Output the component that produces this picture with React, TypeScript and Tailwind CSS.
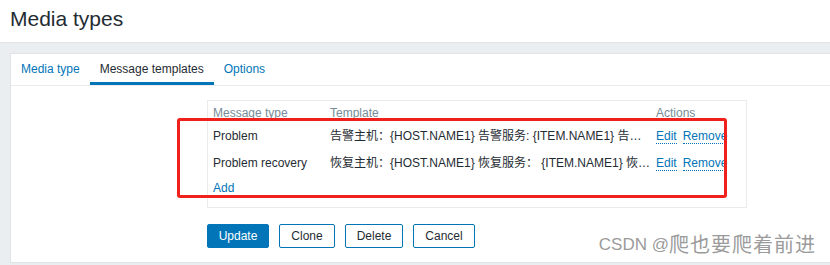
const rows = [
  {
    type: 'Problem',
    template: '告警主机：{HOST.NAME1} 告警服务: {ITEM.NAME1} 告警Key1: {ITEM.KEY1} 告警时间：{EVENT.DATE} {EVENT.TIME}',
  },
  {
    type: 'Problem recovery',
    template: '恢复主机：{HOST.NAME1} 恢复服务： {ITEM.NAME1} 恢复Key1: {ITEM.KEY1} 恢复时间：{EVENT.RECOVERY.DATE}',
  },
];

const tabs = ['Media type', 'Message templates', 'Options'];

export default function App() {
  return (
    <div className="relative w-[830px] h-[265px] overflow-hidden bg-[#ebeef0] font-['Liberation_Sans','Noto_Sans_CJK_SC',sans-serif] text-[12px] leading-[14px] text-[#1f2c33]">
      <header className="h-[43px] bg-white border-b border-[#dfe4e7] pl-[10px] pt-[7px]">
        <h1 className="text-[21px] leading-[24px]">Media types</h1>
      </header>

      <div className="pl-[10px] pt-[10px]">
        <div className="bg-white border-y border-l border-[#dfe4e7] pb-[14px]">
          {/* tabs */}
          <ul className="flex border-b border-[#ebebeb]">
            {tabs.map((t) => {
              const active = t === 'Message templates';
              return (
                <li
                  key={t}
                  className={
                    active
                      ? 'h-[31px] px-[10px] pt-[8px] border-b-[3px] border-[#0275b8] text-[#1f2c33]'
                      : 'h-[31px] px-[10px] pt-[8px] text-[#0275b8]'
                  }
                >
                  {t}
                </li>
              );
            })}
          </ul>

          <div className="ml-[196px]">
            {/* templates table */}
            <div className="mt-[14px] w-[540px] border border-[#ebebeb] px-[5px] pb-[5px]">
              <div className="grid grid-cols-[117px_326px_1fr] h-[22px] pt-[5px] text-[#768d99]">
                <span>Message type</span>
                <span>Template</span>
                <span>Actions</span>
              </div>
              {rows.map((r) => (
                <div key={r.type} className="grid grid-cols-[117px_326px_1fr] items-start h-[27px] pt-[6px]">
                  <span>{r.type}</span>
                  <span className="min-w-0 truncate pr-[4px]">{r.template}</span>
                  <span className="flex items-start gap-[6px] whitespace-nowrap">
                    <a className="text-[#0275b8] border-b border-dotted border-[#0275b8]">Edit</a>
                    <a className="text-[#0275b8] border-b border-dotted border-[#0275b8]">Remove</a>
                  </span>
                </div>
              ))}
              <div className="h-[25px] pt-[4px]">
                <a className="text-[#0275b8]">Add</a>
              </div>
            </div>

            {/* form buttons */}
            <div className="mt-[16px] flex gap-[10px]">
              <button className="w-[62px] h-[24px] rounded-[2px] bg-[#0275b8] border border-[#0275b8] text-white">
                Update
              </button>
              <button className="w-[56px] h-[24px] rounded-[2px] bg-white border border-[#0275b8] text-[#1f2c33]">
                Clone
              </button>
              <button className="w-[58px] h-[24px] rounded-[2px] bg-white border border-[#0275b8] text-[#1f2c33]">
                Delete
              </button>
              <button className="w-[62px] h-[24px] rounded-[2px] bg-white border border-[#0275b8] text-[#1f2c33]">
                Cancel
              </button>
            </div>
          </div>
        </div>
      </div>

      {/* annotation box drawn over the screenshot */}
      <div className="absolute left-[177px] top-[118px] w-[550px] h-[80px] border-[3px] border-[#f0201c] rounded-[3px]" />

      {/* watermark */}
      <div className="absolute right-[15px] top-[234px] flex items-center leading-[22px] text-[#9b9b9b] whitespace-nowrap">
        <span className="text-[17px]">CSDN @</span>
        <span className="text-[20px] tracking-[1px] -mr-[1px]">爬也要爬着前进</span>
      </div>
    </div>
  );
}
